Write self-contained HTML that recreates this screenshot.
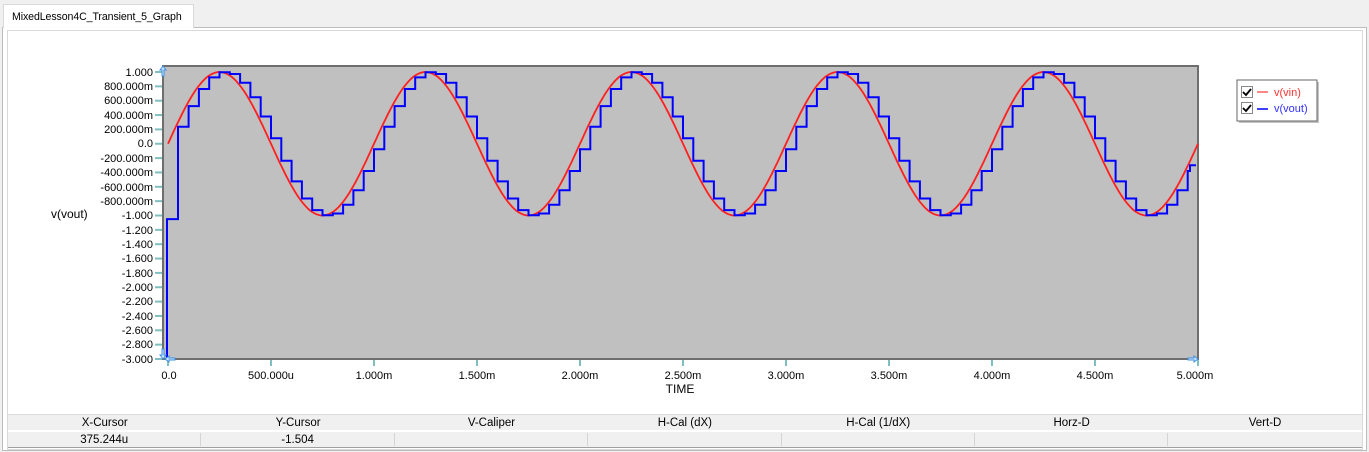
<!DOCTYPE html>
<html><head><meta charset="utf-8"><style>
*{margin:0;padding:0;box-sizing:border-box}
body{width:1369px;height:452px;background:#f0f0f0;font-family:"Liberation Sans",sans-serif;font-size:11px;color:#000;position:relative;overflow:hidden}
.tab{position:absolute;left:3px;top:4px;width:191px;height:24px;background:#fff;border:1px solid #d9d9d9;border-bottom:none;padding:6px 0 0 8px;font-size:10.6px;letter-spacing:-0.1px;z-index:2}
.panel{position:absolute;left:2px;top:27px;width:1365px;height:424px;background:#fff;border:1px solid #bdbdbd}
.inner{position:absolute;left:7px;top:30px;width:1356px;height:420px;border:1px solid #d9d9d9;background:#fff}
.row{position:absolute;left:8px;width:1354px;background:#f0f0f0;display:flex}
.row div{width:193.4px;text-align:center;font-size:11.5px;line-height:16px}
.hdr{top:414px;height:16px;border-top:1px solid #dcdcdc}
.val{top:431px;height:17px;border-bottom:1px solid #a0a0a0;border-top:1px solid #fff}
.val div{border-right:1px solid #d5d5d5;margin:1px 0;line-height:15px}
svg{position:absolute;left:0;top:0}
</style></head><body>
<div class="tab">MixedLesson4C_Transient_5_Graph</div>
<div class="panel"></div>
<div class="inner"></div>
<div class="row hdr"><div>X-Cursor</div><div>Y-Cursor</div><div>V-Caliper</div><div>H-Cal (dX)</div><div>H-Cal (1/dX)</div><div>Horz-D</div><div>Vert-D</div></div>
<div class="row val"><div>375.244u</div><div>-1.504</div><div></div><div></div><div></div><div></div><div style="border-right:none"></div></div>
<svg width="1369" height="452" font-family="Liberation Sans, sans-serif" font-size="11">
<rect x="163" y="66" width="1035" height="293" fill="#c0c0c0" stroke="#6e6e6e" stroke-width="2"/>
<g id="yt" stroke="#7fbfbf" stroke-width="2"></g>
<g text-anchor="end" fill="#000">
<text x="153" y="76">1.000</text><text x="153" y="90">800.000m</text><text x="153" y="104">600.000m</text><text x="153" y="119">400.000m</text><text x="153" y="133">200.000m</text><text x="153" y="147">0.0</text><text x="153" y="162">-200.000m</text><text x="153" y="176">-400.000m</text><text x="153" y="191">-600.000m</text><text x="153" y="205">-800.000m</text><text x="153" y="219">-1.000</text><text x="153" y="234">-1.200</text><text x="153" y="248">-1.400</text><text x="153" y="262">-1.600</text><text x="153" y="277">-1.800</text><text x="153" y="291">-2.000</text><text x="153" y="305">-2.200</text><text x="153" y="320">-2.400</text><text x="153" y="334">-2.600</text><text x="153" y="348">-2.800</text><text x="153" y="363">-3.000</text>
</g>
<g text-anchor="middle" fill="#000">
<text x="169" y="379">0.0</text><text x="271" y="379">500.000u</text><text x="374" y="379">1.000m</text><text x="477" y="379">1.500m</text><text x="580" y="379">2.000m</text><text x="683" y="379">2.500m</text><text x="786" y="379">3.000m</text><text x="889" y="379">3.500m</text><text x="992" y="379">4.000m</text><text x="1095" y="379">4.500m</text><text x="1195" y="379">5.000m</text>
<text x="680" y="393" font-size="12">TIME</text>
</g>
<text x="51" y="218" font-size="12" fill="#000">v(vout)</text>
<g id="xt" stroke="#7fbfbf" stroke-width="2"></g>
<path id="vin" fill="none" stroke="#ff2020" stroke-width="1.8"/>
<path id="vout" fill="none" stroke="#0000ff" stroke-width="2"/>
<path d="M163 66 l-3 4 h2 v6 h2 v-6 h2 z" fill="#cfe6ff" stroke="#3f8fe0"/>
<path d="M163 359 l-3 -4 h2 v-6 h2 v6 h2 z" fill="#cfe6ff" stroke="#3f8fe0"/>
<path d="M165 359 l4 -3 v2 h6 v2 h-6 v2 z" fill="#cfe6ff" stroke="#3f8fe0"/>
<path d="M1198 359 l-4 -3 v2 h-6 v2 h6 v2 z" fill="#cfe6ff" stroke="#3f8fe0"/>
<rect x="1239" y="82" width="80" height="41" fill="#888" opacity="0.5"/>
<rect x="1237" y="80" width="80" height="41" fill="#fff" stroke="#666" stroke-width="1"/>
<rect x="1241.5" y="86.5" width="11" height="11" fill="#fff" stroke="#888"/>
<path d="M1243 92 l3 3 l5 -6" fill="none" stroke="#000" stroke-width="1.8"/>
<rect x="1241.5" y="102.5" width="11" height="11" fill="#fff" stroke="#888"/>
<path d="M1243 108 l3 3 l5 -6" fill="none" stroke="#000" stroke-width="1.8"/>
<line x1="1257" y1="92" x2="1268" y2="92" stroke="#ff6060" stroke-width="1.5"/>
<line x1="1257" y1="109" x2="1268" y2="109" stroke="#0000ff" stroke-width="1.5"/>
<text x="1274" y="96" fill="#ff3030">v(vin)</text>
<text x="1274" y="112" fill="#3030ff">v(vout)</text>
</svg>
<script>
var x0=168,px=206,y0=143.75,py=71.75;
function Y(v){return y0-v*py}
var d="";
for(var i=0;i<=500;i++){var t=i/100;d+=(i?"L":"M")+(x0+t*px).toFixed(1)+" "+Y(Math.sin(2*Math.PI*t)).toFixed(1)}
document.getElementById("vin").setAttribute("d",d);
var s="M167 359 V"+Y(-1.05)+" H178";var st=0.05;
for(var k=1;k<100;k++){var t=k*st;var v=Math.sin(2*Math.PI*(t-0.012));var x=x0+t*px;if(k>1)s+="H"+x.toFixed(1);s+="V"+Y(v).toFixed(1)}
s+="H1190 V"+Y(-0.3)+" H1196";
document.getElementById("vout").setAttribute("d",s);
var yt="";for(var i=0;i<=20;i++){var y=72+i*14.35;yt+='<line x1="155" y1="'+y+'" x2="162" y2="'+y+'"/>'}
document.getElementById("yt").innerHTML=yt;
var xt="";for(var i=0;i<=10;i++){var x=x0+i*103;xt+='<line x1="'+x+'" y1="360" x2="'+x+'" y2="366"/>'}
document.getElementById("xt").innerHTML=xt;
</script>
</body></html>
